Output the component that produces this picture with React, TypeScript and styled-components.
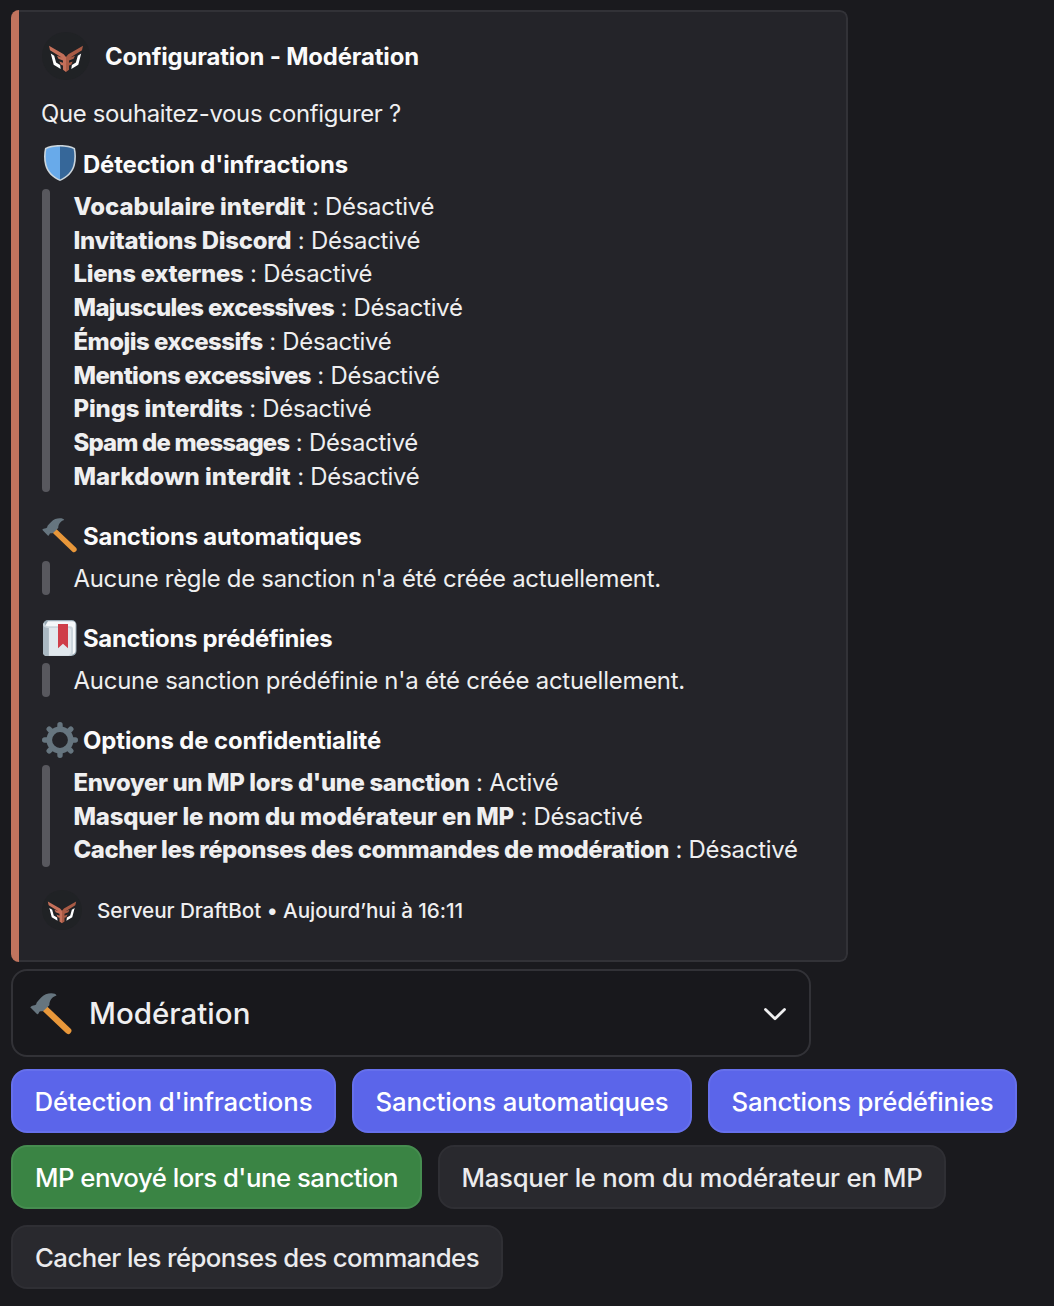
import React from "react";
import styled, { createGlobalStyle } from "styled-components";

const GlobalStyle = createGlobalStyle`
  *, *::before, *::after { box-sizing: border-box; }
  body {
    margin: 0;
    background: #1a1a1e;
    color: #efeff0;
    font-family: Inter, "Noto Sans", sans-serif;
    font-size: 23.92px;
    font-feature-settings: "calt" 0;
    line-height: 33.75px;
  }
`;

const Page = styled.main`
  width: 1054px;
  height: 1306px;
  padding: 10px 11px;
  white-space: nowrap;
  overflow: hidden;
`;

const Embed = styled.article`
  display: flex;
  width: 837px;
  height: 952px;
  border-radius: 8px;
  overflow: hidden;
`;

const Accent = styled.div`
  width: 8px;
  flex: none;
  background: #c1745e;
`;

const EmbedBody = styled.div`
  flex: 1;
  padding: 20px 20px 0 23px;
  background: #242429;
  border: 2px solid #323237;
  border-left: 0;
  border-radius: 0 8px 8px 0;
`;

const Author = styled.header`
  display: flex;
  align-items: center;
  gap: 15px;
  height: 48px;
  color: #fbfbfb;
  font-weight: 650;
`;

const Description = styled.p`
  margin: 17px 0 14px -1px;
  height: 34px;
`;

const Section = styled.section`
  margin-bottom: 25px;
`;

const SectionTitle = styled.h2`
  display: flex;
  align-items: center;
  gap: 5px;
  height: 36px;
  margin: 0 0 7.5px;
  color: #fbfbfb;
  font-size: inherit;
  font-weight: 650;
`;

const Label = styled.span<{ $track?: number; $drop?: number }>`
  padding-top: ${(p) => p.$drop ?? 0}px;
  letter-spacing: ${(p) => p.$track ?? 0}px;
`;

const Quote = styled.blockquote`
  display: flex;
  gap: 23.5px;
  margin: 0;
`;

const QuoteBar = styled.div`
  width: 8px;
  flex: none;
  border-radius: 4px;
  background: #58585e;
`;

const QuoteBody = styled.div<{ $drop?: number }>`
  padding-top: ${(p) => p.$drop ?? 1}px;
  margin-bottom: -${(p) => p.$drop ?? 1}px;
`;

const Strong = styled.strong<{ $track?: number }>`
  font-weight: 800;
  letter-spacing: ${(p) => p.$track ?? 0}px;
`;

const Footer = styled.footer`
  display: flex;
  align-items: center;
  gap: 15px;
  height: 40px;
  margin-top: -2px;
  font-size: 20.7px;
  font-weight: 500;
`;

const Select = styled.div`
  display: flex;
  align-items: center;
  width: 800px;
  height: 88px;
  margin-top: 7px;
  padding: 0 20px 0 17px;
  border: 2px solid #323237;
  border-radius: 16px;
  background: #18181c;
  font-size: 29.5px;
  font-weight: 500;
`;

const SelectLabel = styled.span`
  flex: 1;
  padding-top: 2px;
  margin-left: 16px;
  letter-spacing: 0;
`;

const Actions = styled.div`
  display: flex;
  flex-direction: column;
  margin-top: 12px;
`;

const ActionRow = styled.div<{ $gap?: number }>`
  display: flex;
  gap: 16px;
  margin-bottom: ${(p) => p.$gap ?? 0}px;
`;

const tones = {
  primary: ["#5b65ea", "#6670ec", "#ffffff"],
  success: ["#3a8444", "#468d50", "#ffffff"],
  secondary: ["#29292e", "#2f2f34", "#ebebed"],
};

const Button = styled.button<{ $tone: keyof typeof tones; $width: number; $track: number }>`
  width: ${(p) => p.$width}px;
  height: 64px;
  padding: 0;
  border: 2px solid ${(p) => tones[p.$tone][1]};
  border-radius: 16px;
  background: ${(p) => tones[p.$tone][0]};
  color: ${(p) => tones[p.$tone][2]};
  font: 500 25.76px Inter, "Noto Sans", sans-serif;
  letter-spacing: ${(p) => p.$track}px;
  white-space: nowrap;
`;

const Icon = styled.svg<{ $size: number }>`
  display: block;
  flex: none;
  width: ${(p) => p.$size}px;
  height: ${(p) => p.$size}px;
`;

const AvatarHalf = ({ color }: { color: string }) => (
  <>
    <path d="M8.800 21.500l3.400 2.200 1.900 6.800 4 2.600.6 3.800-7-4.100z" fill="#fff" />
    <path
      fill={color}
      d="M7 13.700l14.700 8.600L24 25v15l-3-2.300v-4.300l-2.200-.7-1.500-3.200 3.700 1.300v-2.200l-4.600-1.800-1.400-3 4.600 1.600L8 18.200z"
    />
  </>
);

const Avatar = ({ size }: { size: number }) => (
  <Icon $size={size} viewBox="0 0 48 48">
    <circle cx="24" cy="24" r="24" fill="#202225" />
    <AvatarHalf color="#c5705a" />
    <g transform="matrix(-1 0 0 1 48 0)">
      <AvatarHalf color="#a95b45" />
    </g>
  </Icon>
);

const Shield = () => (
  <Icon $size={36} viewBox="0 0 36 36">
    <path
      fill="#ccd6dd"
      d="M18 0C11.500 0 6 1.300 3 3 1.800 8 1.600 14.500 3 20c1.900 7.500 7.500 13 15 16 7.500-3 13.100-8.500 15-16 1.400-5.500 1.200-12 0-17C30 1.300 24.500 0 18 0z"
    />
    <path fill="#68aaea" d="M18 1.600C12.300 1.600 7.400 2.700 4.400 4.100 3.400 8.500 3.300 14.600 4.600 19.700 6.300 26.300 11.200 31.500 18 34.400z" />
    <path fill="#366799" d="M18 1.600c5.700 0 10.600 1.100 13.600 2.500 1 4.400 1.100 10.500-.2 15.600C29.700 26.300 24.800 31.500 18 34.400z" />
  </Icon>
);

const Hammer = ({ size }: { size: number }) => (
  <Icon $size={size} viewBox="0 -1.200 36 36">
    <path d="M13 13.200L32 31.300" stroke="#e8973a" strokeWidth="5.300" strokeLinecap="round" />
    <path
      fill="#66757f"
      d="M.2 11.600l5.600 5.700c.5.400 1 .1 1.300-.4l.8-1.500c.8-.9 2.100-.3 3.200-.7l5.100-4.900c.1-3.600 1.900-6.900 6-8.100C21.700-.1 17.300-.7 13.200.7 10 2.100 8 4.800 5.800 7.400c-.7.800-.2 1.500-1 2.100-1.300.8-2.800.2-4.600 2.100z"
    />
  </Icon>
);

const Bookmark = () => (
  <Icon $size={36} viewBox="0 0 36 36">
    <rect x="1" y="0" width="33.500" height="36" rx="5" fill="#99aab5" />
    <path fill="#f5f8fa" d="M6 1.200h24.500a3 3 0 013 3V30a4 4 0 01-3.500 4.500L5 8 3 6z" />
    <path fill="#ccd6dd" d="M1 5c0-1 .5-2 1.500-2.500C2.500 5 4 6.300 6.500 6.300H28a3 3 0 013 3V32a4 4 0 01-4 4H5a4 4 0 01-4-4z" />
    <path fill="#aab8c2" d="M1 5c.5 2 2.500 2.800 5.800 3V36H5a4 4 0 01-4-4z" />
    <path fill="#e1e8ed" d="M7 8h19.500A2.500 2.500 0 0129 10.500V32a4 4 0 01-2.500 3.600H7z" />
    <path fill="#cf3e49" d="M16 4h10v24.300l-5-4.500-5 4.500z" />
  </Icon>
);

const Gear = () => (
  <Icon $size={36} viewBox="0 0 36 36">
    {[0, 45, 90, 135].map((angle) => (
      <path
        key={angle}
        transform={`rotate(${angle} 18 18)`}
        d="M18 2.700V9M18 27v6.300"
        stroke="#66757f"
        strokeWidth="5.400"
        strokeLinecap="round"
      />
    ))}
    <circle cx="18" cy="18" r="10.700" fill="#242429" stroke="#66757f" strokeWidth="5.600" />
  </Icon>
);

const Chevron = () => (
  <Icon $size={28} viewBox="0 0 28 28" fill="none">
    <path d="M4.500 10.500l9.500 9.300 9.500-9.300" stroke="#efeff0" strokeWidth="2.800" strokeLinecap="round" strokeLinejoin="round" />
  </Icon>
);

type Entry = { name: string; track: number; value: string };
const off = "Désactivé";

const detection: Entry[] = [
  { name: "Vocabulaire interdit", track: -0.05, value: off },
  { name: "Invitations Discord", track: -0.25, value: off },
  { name: "Liens externes", track: -0.27, value: off },
  { name: "Majuscules excessives", track: -0.67, value: off },
  { name: "Émojis excessifs", track: -0.52, value: off },
  { name: "Mentions excessives", track: -0.65, value: off },
  { name: "Pings interdits", track: -0.12, value: off },
  { name: "Spam de messages", track: -0.82, value: off },
  { name: "Markdown interdit", track: 0, value: off },
];

const privacy: Entry[] = [
  { name: "Envoyer un MP lors d'une sanction", track: -0.37, value: "Activé" },
  { name: "Masquer le nom du modérateur en MP", track: -0.18, value: off },
  { name: "Cacher les réponses des commandes de modération", track: -0.47, value: off },
];

const Entries = ({ items, drop }: { items: Entry[]; drop: number }) => (
  <Quote>
    <QuoteBar />
    <QuoteBody $drop={drop}>
      {items.map((item) => (
        <div key={item.name}>
          <Strong $track={item.track}>{item.name}</Strong>
          <Label $track={-0.25}> : {item.value}</Label>
        </div>
      ))}
    </QuoteBody>
  </Quote>
);

const Sentence = ({ track, children }: { track: number; children: string }) => (
  <Quote>
    <QuoteBar />
    <QuoteBody>
      <Label $track={track}>{children}</Label>
    </QuoteBody>
  </Quote>
);

const Heading = ({ icon, track, children }: { icon: React.ReactNode; track: number; children: string }) => (
  <SectionTitle>
    {icon}
    <Label $track={track} $drop={3}>{children}</Label>
  </SectionTitle>
);

export default function App() {
  return (
    <Page>
      <GlobalStyle />
      <Embed>
        <Accent />
        <EmbedBody>
          <Author>
            <Avatar size={48} />
            <Label $track={-0.17} $drop={2}>Configuration - Modération</Label>
          </Author>
          <Description>
            <Label $track={-0.32}>Que souhaitez-vous configurer ?</Label>
          </Description>
          <Section>
            <Heading icon={<Shield />} track={-0.15}>Détection d'infractions</Heading>
            <Entries items={detection} drop={1.25} />
          </Section>
          <Section>
            <Heading icon={<Hammer size={36} />} track={-0.2}>Sanctions automatiques</Heading>
            <Sentence track={-0.27}>Aucune règle de sanction n'a été créée actuellement.</Sentence>
          </Section>
          <Section>
            <Heading icon={<Bookmark />} track={-0.28}>Sanctions prédéfinies</Heading>
            <Sentence track={-0.22}>Aucune sanction prédéfinie n'a été créée actuellement.</Sentence>
          </Section>
          <Section>
            <Heading icon={<Gear />} track={-0.12}>Options de confidentialité</Heading>
            <Entries items={privacy} drop={0.5} />
          </Section>
          <Footer>
            <Avatar size={40} />
            <Label $track={-0.07} $drop={2}>Serveur DraftBot • Aujourd’hui à 16:11</Label>
          </Footer>
        </EmbedBody>
      </Embed>
      <Select>
        <Hammer size={43} />
        <SelectLabel>Modération</SelectLabel>
        <Chevron />
      </Select>
      <Actions>
        <ActionRow $gap={12}>
          <Button $tone="primary" $width={325} $track={-0.12}>Détection d'infractions</Button>
          <Button $tone="primary" $width={340} $track={-0.13}>Sanctions automatiques</Button>
          <Button $tone="primary" $width={309} $track={-0.27}>Sanctions prédéfinies</Button>
        </ActionRow>
        <ActionRow $gap={16}>
          <Button $tone="success" $width={411} $track={-0.5}>MP envoyé lors d'une sanction</Button>
          <Button $tone="secondary" $width={508} $track={-0.27}>Masquer le nom du modérateur en MP</Button>
        </ActionRow>
        <ActionRow>
          <Button $tone="secondary" $width={492} $track={-0.56}>Cacher les réponses des commandes</Button>
        </ActionRow>
      </Actions>
    </Page>
  );
}
